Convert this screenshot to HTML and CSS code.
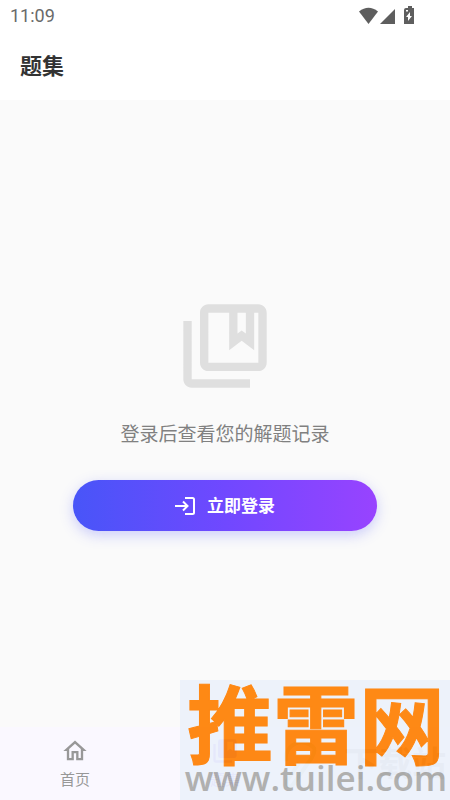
FILE: index.html
```html
<!DOCTYPE html>
<html lang="zh-CN">
<head>
<meta charset="utf-8">
<meta name="viewport" content="width=device-width, initial-scale=1">
<title>题集</title>
<link rel="stylesheet" href="styles.css">
</head>
<body>
<div class="status">
  <span class="time">11:09</span>
  <svg class="status-icons" viewBox="0 0 58 20" aria-hidden="true">
    <path d="M0 5.500Q9.500-2 19 5.500L9.500 18Z"/>
    <path d="M36 3V18H21Z"/>
    <path fill-rule="evenodd" d="M47 2h2V0h4v2h2v16h-10V4q0-2 2-2ZM51 6l-4 5h2v4l4-5h-2ZM47 4v1.500h2V4Z"/>
  </svg>
</div>
<header class="header"><h1>题集</h1></header>
<main class="empty">
  <svg class="books" viewBox="0 0 24 24" aria-hidden="true"><path d="M4 6H2v14c0 1.100.9 2 2 2h14v-2H4V6zm16-4H8c-1.100 0-2 .9-2 2v12c0 1.100.9 2 2 2h12c1.100 0 2-.9 2-2V4c0-1.100-.9-2-2-2zm-3 2v5l-1-.75L15 9V4h2zm3 12H8V4h5v9l3-2.250L19 13V4h1v12z"/></svg>
  <p class="message">登录后查看您的解题记录</p>
  <button class="login" type="button">
    <svg class="login-icon" viewBox="0 0 20 20" aria-hidden="true"><path d="M0 10H12M8 5.500L12.500 10L8 14.500M10 2H17.500Q19 2 19 3.500V16.500Q19 18 17.500 18H10"/></svg>
    <span>立即登录</span>
  </button>
</main>
<nav class="tabs">
  <a class="tab" href="#home">
    <svg class="tab-icon" viewBox="0 0 24 24" aria-hidden="true"><path d="M12 5.690l5 4.500V18h-2v-6H9v6H7v-7.810l5-4.500M12 3L2 12h3v8h6v-6h2v6h6v-8h3L12 3z"/></svg>
    <span>首页</span>
  </a>
  <a class="tab tab-active" href="#sets" aria-current="page">
    <svg class="tab-icon" viewBox="0 0 24 24" aria-hidden="true"><path d="M4 6H2v14q0 2 2 2h14v-2H4ZM8 2q-2 0-2 2v12q0 2 2 2h12q2 0 2-2V4q0-2-2-2ZM14 4h5v8l-2.500-2L14 12Z"/></svg>
    <span>题集</span>
  </a>
  <div class="station">
    <svg class="station-logo" viewBox="0 0 36 50" aria-hidden="true"><path d="M2 22A16 16 0 0 1 30 9Q32 14 24 24L8 47Q2 49 3 42L15 24"/></svg>
    <span>下载站</span>
  </div>
</nav>
<aside class="mark">
  <span class="mark-name">推雷网</span>
  <span class="mark-url">www.tuilei.com</span>
</aside>
</body>
</html>
```
FILE: styles.css
```css
* {
  box-sizing: border-box;
}

body {
  margin: 0;
  min-height: 100vh;
  display: flex;
  flex-direction: column;
  background: #fafafa;
  font-family: Roboto, "Noto Sans CJK SC", sans-serif;
  position: relative;
}

.status {
  display: flex;
  justify-content: space-between;
  align-items: center;
  height: 32px;
  padding: 0 33px 0 10px;
  background: #fff;
  color: #6a6a6a;
}

.time {
  font-size: 18px;
  line-height: 20px;
}

.status-icons {
  width: 58px;
  height: 20px;
  fill: #5e5e5e;
}

.header {
  height: 68px;
  padding: 19px 20px 0;
  background: #fff;
}

.header h1 {
  margin: 0;
  font-size: 22px;
  line-height: 32px;
  font-weight: 700;
  color: #333;
}

.empty {
  flex: 1;
  display: flex;
  flex-direction: column;
  align-items: center;
  justify-content: center;
  padding: 0 73px;
}

.books {
  width: 100px;
  height: 100px;
  fill: #dfdfdf;
}

.message {
  margin: 25px 0 31px;
  font-size: 19px;
  line-height: 28px;
  color: #808080;
  white-space: nowrap;
}

.login {
  display: flex;
  align-items: center;
  justify-content: center;
  gap: 12px;
  width: 100%;
  height: 51px;
  border: 0;
  border-radius: 26px;
  background: linear-gradient(90deg, #4855f8, #7048ff 50%, #9843ff);
  box-shadow: 0 4px 14px rgba(80, 85, 250, 0.28);
  color: #fff;
  font: inherit;
  font-size: 17px;
  line-height: 24px;
  font-weight: 700;
}

.login-icon {
  width: 20px;
  height: 20px;
  fill: none;
  stroke: #fff;
  stroke-width: 2;
}

.tabs {
  display: grid;
  grid-template-columns: repeat(3, minmax(0, 1fr));
  height: 73px;
  background: #faf8ff;
}

.tab {
  display: flex;
  flex-direction: column;
  align-items: center;
  gap: 4px;
  padding-top: 10px;
  color: #989898;
  font-size: 15px;
  line-height: 22px;
  text-decoration: none;
}

.tab-icon {
  width: 28px;
  height: 28px;
  fill: currentColor;
}

.tab-active {
  color: #7450ff;
}

.station {
  display: flex;
  align-items: center;
  justify-content: flex-end;
  gap: 24px;
  padding-right: 4px;
  color: #8a9298;
  font-size: 34px;
  line-height: 48px;
  font-weight: 700;
  white-space: nowrap;
}

.station-logo {
  width: 36px;
  height: 50px;
  flex: none;
  fill: none;
  stroke: #9fc8aa;
  stroke-width: 4;
}

.mark {
  position: absolute;
  right: 0;
  bottom: 0;
  width: 270px;
  height: 120px;
  padding-left: 2px;
  display: flex;
  flex-direction: column;
  align-items: center;
  background: #edf2fb;
  opacity: 0.94;
  white-space: nowrap;
}

.mark-name {
  font-family: "Noto Sans CJK SC", sans-serif;
  font-size: 86px;
  line-height: 82px;
  font-weight: 700;
  color: #ff8207;
  -webkit-text-stroke: 1px #ff8207;
}

.mark-url {
  font-family: "Open Sans", sans-serif;
  font-size: 35px;
  line-height: 32px;
  font-weight: 600;
  color: #acacab;
}
```
